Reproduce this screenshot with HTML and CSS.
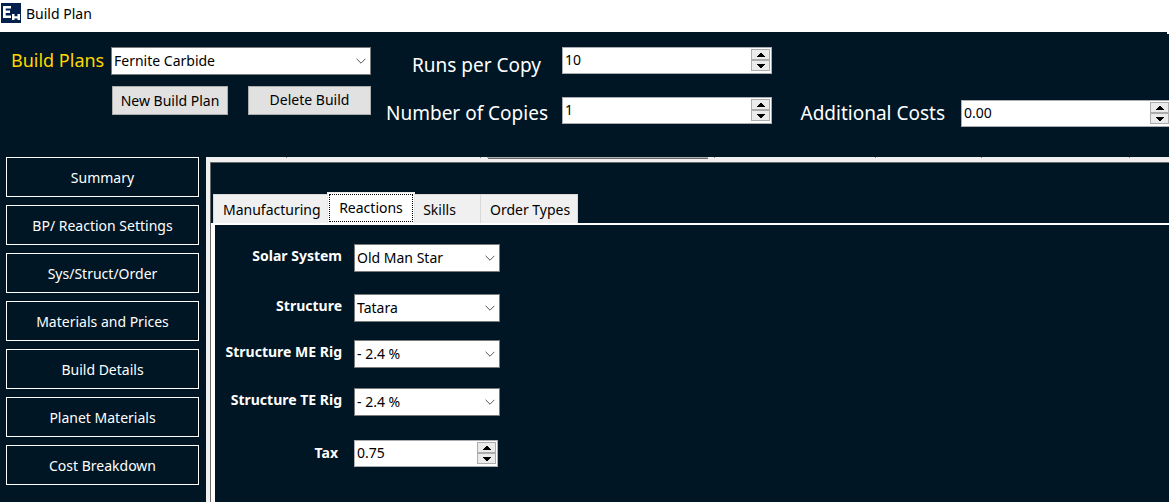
FILE: index.html
```html
<!DOCTYPE html>
<html lang="en">
<head>
<meta charset="utf-8">
<title>Build Plan</title>
<link rel="stylesheet" href="styles.css">
</head>
<body>
<svg width="0" height="0" class="defs" aria-hidden="true">
  <symbol id="chevron" viewBox="0 0 10 6"><path d="M0.600 0.800 5 5.200 9.400 0.800" fill="none" stroke="#555" stroke-width="1"/></symbol>
  <symbol id="up" viewBox="0 0 8 4"><path d="M3 0h2v1h1v1h1v1h1v1H0V3h1V2h1V1h1z"/></symbol>
  <symbol id="down" viewBox="0 0 8 4"><path d="M0 0h8v1H7v1H6v1H5v1H3V3H2V2H1V1H0z"/></symbol>
</svg>
<header class="titlebar">
  <svg class="logo" viewBox="0 0 20 20" aria-hidden="true">
    <path fill="#04204c" d="M0 0h20v20H0z"/>
    <path fill="#fff" d="M2 3h8v2.500H4.700V7.500H9v2.500H4.700V12.500H10V15H2zM11 11h2.500v2.300h3V11H19v6h-2.500v-1.500h-3V17H11z"/>
  </svg>
  <h1 class="title">Build Plan</h1>
</header>
<section class="toolbar">
  <div class="plans">
    <label class="plans-label" for="plan">Build Plans</label>
    <div class="combo">
      <select id="plan"><option>Fernite Carbide</option></select>
      <svg class="chevron"><use href="#chevron"/></svg>
    </div>
    <div class="plan-actions">
      <button class="button" type="button">New Build Plan</button>
      <button class="button wide" type="button">Delete Build</button>
    </div>
  </div>
  <div class="counts">
    <label class="count-label runs" for="runs">Runs per Copy</label>
    <div class="spin">
      <input id="runs" type="text" value="10">
      <div class="arrows"><button type="button" aria-label="Increase runs"><svg><use href="#up"/></svg></button><button type="button" aria-label="Decrease runs"><svg><use href="#down"/></svg></button></div>
    </div>
    <label class="count-label" for="copies">Number of Copies</label>
    <div class="spin">
      <input id="copies" type="text" value="1">
      <div class="arrows"><button type="button" aria-label="Increase copies"><svg><use href="#up"/></svg></button><button type="button" aria-label="Decrease copies"><svg><use href="#down"/></svg></button></div>
    </div>
  </div>
  <div class="costs">
    <label class="count-label" for="costs">Additional Costs</label>
    <div class="spin">
      <input id="costs" type="text" value="0.00">
      <div class="arrows"><button type="button" aria-label="Increase costs"><svg><use href="#up"/></svg></button><button type="button" aria-label="Decrease costs"><svg><use href="#down"/></svg></button></div>
    </div>
  </div>
</section>
<main class="workspace">
  <nav class="sidebar">
    <button type="button">Summary</button>
    <button type="button">BP/ Reaction Settings</button>
    <button type="button">Sys/Struct/Order</button>
    <button type="button">Materials and Prices</button>
    <button type="button">Build Details</button>
    <button type="button">Planet Materials</button>
    <button type="button">Cost Breakdown</button>
  </nav>
  <section class="panel">
    <svg class="ruler" aria-hidden="true"><path fill="#888" d="M76 0h1v1h-1zM270 0h1v1h-1zM504 0h1v1h-1zM665 0h1v1h-1zM771 0h1v1h-1zM919 0h1v1h-1z"/><path fill="#b0b0b0" d="M277 0h221v1H277z"/><path fill="#696969" d="M278 1h220v1H278z"/></svg>
    <div class="panel-body">
      <div class="tabs" role="tablist">
        <button type="button" role="tab" aria-selected="false">Manufacturing</button>
        <button type="button" role="tab" aria-selected="true" class="active"><span>Reactions</span></button>
        <button type="button" role="tab" aria-selected="false" class="skills">Skills</button>
        <button type="button" role="tab" aria-selected="false">Order Types</button>
      </div>
      <form class="page">
        <label for="system">Solar System</label>
        <div class="combo"><select id="system"><option>Old Man Star</option></select><svg class="chevron"><use href="#chevron"/></svg></div>
        <label for="structure">Structure</label>
        <div class="combo"><select id="structure"><option>Tatara</option></select><svg class="chevron"><use href="#chevron"/></svg></div>
        <label for="me">Structure ME Rig</label>
        <div class="combo"><select id="me"><option>- 2.4 %</option></select><svg class="chevron"><use href="#chevron"/></svg></div>
        <label for="te">Structure TE Rig</label>
        <div class="combo"><select id="te"><option>- 2.4 %</option></select><svg class="chevron"><use href="#chevron"/></svg></div>
        <label class="tax" for="tax">Tax</label>
        <div class="spin">
          <input id="tax" type="text" value="0.75">
          <div class="arrows"><button type="button" aria-label="Increase tax"><svg><use href="#up"/></svg></button><button type="button" aria-label="Decrease tax"><svg><use href="#down"/></svg></button></div>
        </div>
      </form>
    </div>
  </section>
</main>
</body>
</html>
```
FILE: styles.css
```css
* { box-sizing: border-box; }
body {
  margin: 0;
  min-height: 100vh;
  display: flex;
  flex-direction: column;
  overflow-x: hidden;
  background: #001624;
  color: #fff;
  font: 14px/20px "Noto Sans", sans-serif;
}
button, input, select { font: inherit; color: #000; margin: 0; border-radius: 0; }
svg { display: block; }
.defs { position: absolute; }

.titlebar {
  display: flex;
  gap: 5px;
  height: 32px;
  padding: 3px 1px;
  background: #fff;
  color: #000;
}
.logo { width: 20px; height: 20px; }
.title { margin: 0; font-size: 14px; font-weight: 400; line-height: 22px; }

.toolbar {
  position: relative;
  display: flex;
  height: 125px;
  padding: 15px 0 0 11px;
}
.toolbar::after {
  content: "";
  position: absolute;
  top: 0;
  right: 0;
  width: 2px;
  height: 2px;
  background: #fff;
}
.plans {
  display: grid;
  grid-template-columns: 100px 260px;
  align-content: start;
  row-gap: 11px;
}
.plans-label { font-size: 18px; line-height: 26px; color: #ffd800; }
.plan-actions { grid-column: 2; display: flex; justify-content: space-between; padding-left: 1px; }
.button {
  width: 116px;
  height: 29px;
  padding: 0;
  border: 1px solid #adadad;
  background: #e1e1e1;
}
.button.wide { width: 123px; padding-bottom: 2px; }

.combo { position: relative; height: 28px; }
.combo select {
  appearance: none;
  display: block;
  width: 100%;
  height: 28px;
  padding: 0 24px 0 2px;
  border: 1px solid #7a7a7a;
  background: #fff;
}
.combo .chevron {
  position: absolute;
  right: 5px;
  top: 11px;
  width: 10px;
  height: 6px;
  pointer-events: none;
}

.spin {
  display: flex;
  height: 27px;
  padding: 1px;
  border: 1px solid #abadb3;
  background: #fff;
}
.spin input {
  flex: 1;
  min-width: 0;
  height: 21px;
  padding: 0 1px;
  border: 0;
  background: none;
}
.arrows { display: flex; flex-direction: column; width: 19px; }
.arrows button {
  display: grid;
  place-items: center;
  height: 11px;
  padding: 0;
  border: 1px solid #acacac;
  background: #ebebeb;
}
.arrows svg { width: 8px; height: 4px; }

.counts {
  display: grid;
  grid-template-columns: 160px 210px;
  column-gap: 16px;
  row-gap: 23px;
  align-content: start;
  margin-left: 15px;
}
.count-label {
  height: 27px;
  font-size: 19px;
  line-height: 32px;
  text-align: right;
  white-space: nowrap;
}
.runs { padding: 2px 5px 0 0; }
.costs {
  display: grid;
  grid-template-columns: 145px 210px;
  column-gap: 16px;
  align-content: start;
  padding-top: 53px;
  margin-left: 28px;
}
.costs .count-label { line-height: 26px; }

.workspace { flex: 1; display: flex; gap: 7px; padding-left: 6px; }
.sidebar { display: flex; flex-direction: column; gap: 8px; width: 193px; flex: none; }
.sidebar button {
  height: 40px;
  padding: 2px 0 0;
  border: 1px solid #fff;
  background: none;
  color: #fff;
}

.panel { flex: 1; display: flex; flex-direction: column; padding-left: 4px; background: #f0f0f0; }
.ruler { width: 100%; height: 5px; }
.panel-body {
  flex: 1;
  padding-top: 29px;
  border-top: 1px solid #696969;
  border-left: 1px solid #696969;
  background: #001624;
}
.tabs { display: flex; align-items: flex-end; height: 31px; padding-left: 2px; }
.tabs button {
  height: 29px;
  padding: 2px 7px 0 9px;
  border: 1px solid #d9d9d9;
  border-bottom: 0;
  background: #f0f0f0;
}
.tabs button:first-child { width: 114px; border-right: 0; }
.tabs .active { width: 88px; height: 31px; padding: 1px; background: #fff; border-color: #e8e8e8; }
.tabs .active span { display: block; height: 28px; line-height: 26px; border: 1px dotted #000; }
.tabs .skills { width: 65px; padding: 2px 16px 0 0; border-left: 0; border-right: 0; }
.page {
  display: grid;
  grid-template-columns: 127px 146px;
  grid-template-rows: 50px 46px 48px 52px 27px;
  column-gap: 12px;
  align-items: start;
  height: calc(100% - 31px);
  padding-top: 19px;
  border-top: 2px solid #fff;
  border-left: 4px solid #fff;
}
.page label { font-weight: 700; line-height: 23px; text-align: right; white-space: nowrap; }
.page .tax { padding-right: 4px; line-height: 26px; }
.page .spin { width: 144px; }
```
